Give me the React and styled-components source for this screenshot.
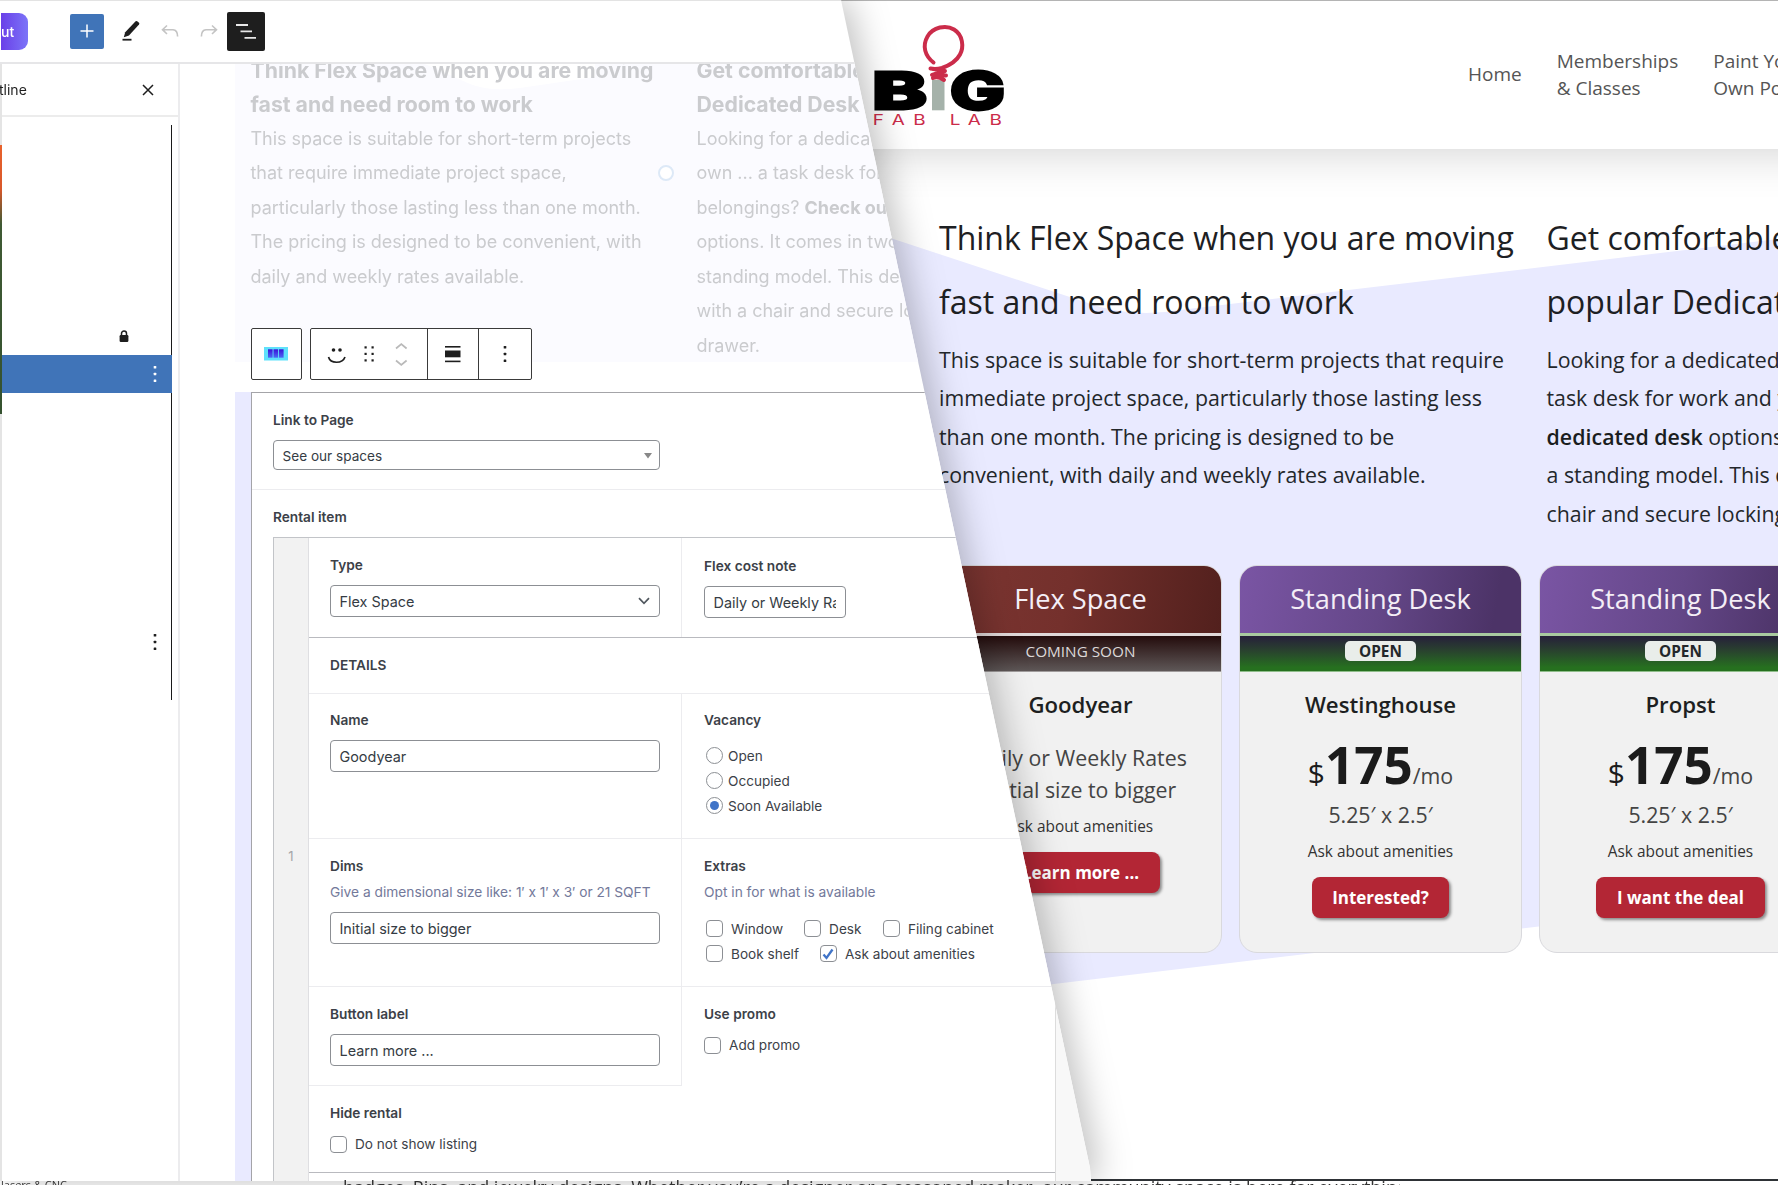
import React from 'react';
import styled, { createGlobalStyle, css } from 'styled-components';

const Global = createGlobalStyle`
  *, *::before, *::after { box-sizing: border-box; }
  html, body { margin: 0; padding: 0; }
  body { width: 1778px; height: 1185px; overflow: hidden; background: #fff; }
  h2, h3, p { margin: 0; font-weight: 400; }
`;

const ui = `Inter, "Liberation Sans", sans-serif`;
const site = `"Open Sans", "Noto Sans", sans-serif`;

const Stage = styled.main`
  display: grid;
  grid-template: 1185px / 1778px;
  width: 1778px;
  height: 1185px;
  overflow: hidden;
  background: #fff;
`;

/* ---------- public site ---------- */

const Site = styled.section`
  grid-area: 1 / 1;
  display: flex;
  flex-direction: column;
  height: 1181px;
  overflow: hidden;
  font-family: ${site};
  color: #23272b;
  border-top: 1px solid #b4b4b4;
  border-bottom: 2px solid #2e3236;
`;

const SiteHeader = styled.header`
  flex: none;
  display: flex;
  align-items: center;
  justify-content: space-between;
  height: 148px;
  margin-right: -80px;
  padding: 0 80px 0 872px;
  background: #fff;
  box-shadow: 0 0 50px rgba(0, 0, 0, 0.2);
  z-index: 1;
`;

const Nav = styled.nav`
  display: flex;
  align-items: center;
  gap: 35px;
  width: 310px;
  padding-bottom: 1px;
  overflow: hidden;
  font-size: 19px;
  line-height: 26.5px;
  color: #555;
  white-space: nowrap;
`;

const NavItem = styled.a`
  flex: none;
`;

const Hero = styled.div`
  position: relative;
  flex: 1;
  padding: 57px 0 0 939px;
`;

const HeroShape = styled.svg`
  position: absolute;
  left: 0;
  top: 0;
`;

const HeroColumns = styled.div`
  position: relative;
  display: grid;
  grid-template-columns: 607.5px 560px;
  height: 359px;
`;

const HeroTitle = styled.h2`
  font-size: 32px;
  line-height: 64px;
  white-space: nowrap;
  color: #1d2023;
`;

const HeroText = styled.p`
  margin-top: 7px;
  font-size: 21.33px;
  line-height: 38.4px;
  white-space: nowrap;
`;

const Strong = styled.strong`
  font-weight: 600;
  letter-spacing: 0.05px;
  color: #1a1d20;
`;

const Cards = styled.div`
  position: relative;
  display: grid;
  grid-template-columns: repeat(3, 283px);
  gap: 17px;
`;

const Card = styled.article`
  display: flex;
  flex-direction: column;
  align-items: center;
  height: 388px;
  border: 1px solid #d9d9dd;
  border-radius: 18px;
  background: #f1f1f1;
  overflow: hidden;
`;

const CardHead = styled.h3`
  flex: none;
  align-self: stretch;
  height: 67px;
  font-size: 27.2px;
  line-height: 65px;
  text-align: center;
  color: #f4eef6;
  background: ${(p) =>
    p.$tone === 'flex'
      ? 'linear-gradient(100deg, #7c3632 0%, #74302c 45%, #52201d 100%)'
      : 'linear-gradient(100deg, #7a55a4 0%, #644788 50%, #4c3367 90%)'};
`;

const Status = styled.div`
  flex: none;
  align-self: stretch;
  display: flex;
  align-items: center;
  justify-content: center;
  height: 39px;
  padding-bottom: 5px;
  border-top: 3px solid ${(p) => (p.$open ? '#a9c9a0' : '#e0d8d8')};
  border-bottom: 1px solid ${(p) => (p.$open ? '#8fbd8a' : '#a09c9c')};
  font-size: 15.3px;
  line-height: 20px;
  color: #dcd8d8;
  background: ${(p) =>
    p.$open
      ? 'linear-gradient(#261f3a, #29402f 40%, #26701f 90%)'
      : 'linear-gradient(#240c0c, #5e5757)'};
`;

const Badge = styled.span`
  padding: 0 14px;
  border-radius: 5px;
  background: #e9edea;
  color: #23272b;
  font-weight: 700;
`;

const CardName = styled.div`
  margin-top: 18px;
  font-size: 22.2px;
  font-weight: 600;
  line-height: 30px;
  color: #1d1f21;
`;

const CardLine = styled.div`
  font-size: 21.33px;
  line-height: 32px;
  color: #444;
  white-space: nowrap;
  margin-top: ${(p) => p.$top || 0}px;
`;

const Amenity = styled.div`
  margin-top: 11px;
  font-size: 15.4px;
  line-height: 20px;
  color: #333;
`;

const Price = styled.div`
  display: flex;
  align-items: baseline;
  margin-top: 10px;
  height: 69px;
  line-height: 69px;
  color: #1b1b1b;
`;

const Currency = styled.span`
  font-size: 30px;
`;

const Amount = styled.span`
  font-size: 51.2px;
  font-weight: 700;
`;

const Per = styled.span`
  font-size: 21.4px;
  color: #444;
`;

const Action = styled.button`
  margin-top: 15px;
  height: 41px;
  padding: 0 20.5px 1px;
  border: 0;
  border-radius: 8px;
  background: #b32635;
  box-shadow: 2px 2px 3px rgba(0, 0, 0, 0.42);
  color: #fff;
  font: 700 17px ${site};
  white-space: nowrap;
`;

/* ---------- editor ---------- */

const EditorShadow = styled.section`
  grid-area: 1 / 1;
  z-index: 2;
  filter: drop-shadow(7px 0 17px rgba(0, 0, 0, 0.25));
`;

const Editor = styled.div`
  display: flex;
  flex-direction: column;
  width: 1110px;
  height: 1181px;
  overflow: hidden;
  background: #fff;
  border-top: 1px solid #e3e3e3;
  font-family: ${ui};
  color: #3c4148;
  clip-path: polygon(0 0, 841px 0, 1090px 1168px, 1091px 1181px, 0 1181px);
`;

const TopBar = styled.header`
  flex: none;
  display: flex;
  align-items: center;
  height: 63px;
  padding: 0 0 1px 1px;
  border-bottom: 2px solid #e6e6e8;
`;

const LayoutButton = styled.span`
  width: 27px;
  height: 37px;
  border-radius: 0 9px 9px 0;
  background: linear-gradient(90deg, #6a3fe8, #7c74f8);
  color: #fff;
  font-size: 14px;
  font-weight: 500;
  line-height: 38px;
`;

const ToolButton = styled.span`
  display: grid;
  place-items: center;
  width: ${(p) => p.$w}px;
  height: ${(p) => p.$h}px;
  margin-left: ${(p) => p.$ml}px;
  border-radius: 2px;
  background: ${(p) => p.$bg || 'transparent'};
`;

const Body = styled.div`
  flex: 1;
  display: flex;
  min-height: 0;
`;

const PhotoEdge = styled.div`
  flex: none;
  width: 2px;
  background: linear-gradient(
    #e4e4e4 0 81px, #e8622c 81px, #d9582a 125px, #3f5a34 160px, #35522f 350px, #e4e4e4 350px
  );
`;

const Outline = styled.aside`
  flex: none;
  display: flex;
  flex-direction: column;
  width: 178px;
  border-right: 2px solid #ececee;
`;

const OutlineHead = styled.div`
  display: flex;
  align-items: center;
  justify-content: space-between;
  height: 53px;
  padding-right: 24px;
  border-bottom: 2px solid #ececec;
  font-size: 14px;
  color: #1e1e1e;
`;

const OutlineTitle = styled.span`
  margin-left: -3px;
`;

const OutlineList = styled.div`
  display: flex;
  flex-direction: column;
  width: 170px;
  height: 575px;
  margin-top: 8px;
  border-right: 1px solid #1a1a1a;
`;

const OutlineRow = styled.div`
  display: flex;
  align-items: center;
  justify-content: flex-end;
  height: 38px;
  margin-top: ${(p) => p.$mt}px;
  padding-right: ${(p) => p.$pr}px;
  margin-right: ${(p) => (p.$active ? -1 : 0)}px;
  background: ${(p) => (p.$active ? '#4074b8' : 'transparent')};
`;

const Canvas = styled.div`
  flex: 1;
  min-width: 0;
  display: flex;
  flex-direction: column;
  padding-left: 55px;
`;

const Faded = styled.div`
  flex: none;
  position: relative;
  height: 298px;
  background: #fbfbff;
`;

const FadedShape = styled.svg`
  position: absolute;
  left: 190px;
  top: 0;
`;

const FadedColumns = styled.div`
  position: relative;
  display: grid;
  grid-template-columns: 446px 400px;
  padding-left: 15.5px;
  height: 298px;
  overflow: hidden;
  color: #cacbce;
`;

const FadedTitle = styled.h2`
  margin-top: -10px;
  font-size: 21.25px;
  font-weight: 700;
  line-height: 33.8px;
  white-space: nowrap;
`;

const FadedText = styled.p`
  font-size: 18px;
  line-height: 34.5px;
  letter-spacing: -0.02px;
  white-space: nowrap;
`;

const Handle = styled.span`
  position: absolute;
  left: 423px;
  top: 101px;
  width: 16px;
  height: 16px;
  border: 2px solid #dde9f7;
  border-radius: 50%;
  background: #fff;
`;

const BlockToolbar = styled.div`
  position: absolute;
  left: 15.5px;
  top: 264px;
  display: flex;
  gap: 8px;
  height: 52px;
`;

const ToolGroup = styled.div`
  display: flex;
  border: 1px solid #3a3a3a;
  border-radius: 2px;
  background: #fff;
`;

const ToolCell = styled.div`
  display: flex;
  align-items: center;
  justify-content: center;
  width: ${(p) => p.$w}px;
  & + & { border-left: 1px solid #3a3a3a; }
`;

const FormBand = styled.div`
  flex: 1;
  margin-top: 30px;
  padding-left: 16px;
  background: #e9eaff;
`;

const Form = styled.div`
  height: 100%;
  border-left: 1px solid #a4a4a8;
  border-top: 1px solid #a4a4a8;
  background: #fff;
`;

const LinkField = styled.div`
  height: 97px;
  padding: 17px 0 0 21px;
  border-bottom: 1px solid #ececef;
`;

const Label = styled.div`
  height: 20px;
  font-size: 13.7px;
  line-height: 20px;
  font-weight: 600;
  white-space: nowrap;
`;

const Help = styled.div`
  margin: 6px 0 2px;
  height: 20px;
  font-size: 13.75px;
  line-height: 20px;
  color: #73799a;
  white-space: nowrap;
`;

const Input = styled.div`
  display: flex;
  align-items: center;
  justify-content: space-between;
  width: ${(p) => p.$w || 330}px;
  height: ${(p) => p.$h || 32}px;
  margin-top: 10px;
  padding: ${(p) => p.$pt || 0}px ${(p) => p.$pr || 9}px 0 8.5px;
  border: 1px solid #8c8f94;
  border-radius: 4px;
  background: #fff;
  font-size: ${(p) => p.$fs || 14.4}px;
  color: #353c44;
  white-space: nowrap;
`;

const Clip = styled.span`
  overflow: hidden;
`;

const Repeater = styled.div`
  display: grid;
  grid-template-columns: 35px 746px 60px;
  height: 645px;
  margin: 10px 0 0 21px;
  border: 1px solid #c2c4c8;
  border-width: 1px 0 0 1px;
`;

const RentalTitle = styled(Label)`
  margin: 17px 0 0 21px;
`;

const Gutter = styled.div`
  display: grid;
  place-items: center;
  padding-bottom: 9px;
  border-right: 1px solid #dfdfe2;
  background: #f2f2f2;
  color: #a5a5a8;
  font-size: 13px;
`;

const EndGutter = styled.div`
  border-left: 1px solid #dcdcdc;
  background: #f8f8f8;
`;

const Rows = styled.div`
  display: flex;
  flex-direction: column;
`;

const Row = styled.div`
  flex: none;
  display: grid;
  grid-template-columns: 373px 1fr;
  height: ${(p) => p.$h}px;
  border-bottom: ${(p) => (p.$half ? 0 : 1)}px solid ${(p) => (p.$strong ? '#b9babf' : '#ececef')};
`;

const Cell = styled.div`
  padding: ${(p) => p.$pt || 17}px 0 0 21px;
  & + & { padding-left: 22px; }
  ${(p) =>
    p.$divide &&
    css`
      border-right: 1px solid #ececef;
    `}
  ${(p) =>
    p.$under &&
    css`
      border-bottom: 1px solid #ececef;
    `}
`;

const Choices = styled.div`
  display: flex;
  flex-direction: column;
  margin: ${(p) => p.$mt}px 0 0 ${(p) => p.$ml || 0}px;
`;

const ChoiceRow = styled.div`
  display: flex;
  height: 25px;
`;

const Choice = styled.div`
  display: flex;
  align-items: center;
  gap: ${(p) => p.$gap || 8}px;
  margin-right: ${(p) => p.$mr || 0}px;
  font-size: 13.6px;
  line-height: 20px;
  white-space: nowrap;
`;

const Box = styled.span`
  display: grid;
  place-items: center;
  flex: none;
  width: 17px;
  height: 17px;
  border: 1px solid #8c8f94;
  border-radius: ${(p) => (p.$round ? '50%' : '4px')};
  background: #fff;
`;

const Dot = styled.span`
  width: 9px;
  height: 9px;
  border-radius: 50%;
  background: #4074c8;
`;

/* ---------- page behind the composite ---------- */

const Backdrop = styled.footer`
  grid-area: 1 / 1;
  align-self: end;
  z-index: 3;
  display: flex;
  height: 5px;
  overflow: hidden;
  font-family: ${site};
  color: #333;
  white-space: nowrap;
`;

const BackdropSmall = styled.div`
  width: 343px;
  padding-left: 1px;
  font-size: 11px;
  line-height: 10px;
  height: 5px;
  overflow: hidden;
`;

const BackdropText = styled.div`
  height: 5px;
  width: 1057px;
  overflow: hidden;
  font-size: 18px;
  line-height: 15px;
`;

const Kebab = ({ color = '#1e1e1e' }) => (
  <svg width="4" height="18" viewBox="0 0 4 18" fill={color}>
    <rect x="0.7" y="1" width="2.6" height="2.6" rx=".6" />
    <rect x="0.7" y="7.7" width="2.6" height="2.6" rx=".6" />
    <rect x="0.7" y="14.4" width="2.6" height="2.6" rx=".6" />
  </svg>
);

const Logo = () => (
  <svg width="134" height="110" viewBox="0 0 134 110" fontFamily={ui}>
    <g fontSize="51.5" fontWeight="800" stroke="#000" strokeWidth="2.8">
      <text x="0" y="88.8" textLength="55" lengthAdjust="spacingAndGlyphs">B</text>
      <text x="78" y="88.8" textLength="55" lengthAdjust="spacingAndGlyphs">G</text>
    </g>
    <rect x="60" y="60" width="12.5" height="30.3" fill="#a5b2aa" />
    <path
      d="M61.5 42.5 C53 36 50 26 55.5 16.5 C61 7 74 4.5 82 9.5 C91 15 92 27 88 34.5 C84 42 77 45.5 70 48 C66 49 61 49 58.5 48.5 M58.5 48.5 L73 51 L60 55 L74 55.5 M61 58 C65 56 69 58 72 60"
      fill="none" stroke="#cb2c4a" strokeWidth="4" strokeLinecap="round" strokeLinejoin="round"
    />
    <g fill="#cb2c4a" fontSize="14" transform="scale(1.35 1)">
      <text x="0.6 14.6 30.6" y="104.8">FAB</text>
      <text x="57.6 71 87" y="104.8">LAB</text>
    </g>
  </svg>
);

const Field = ({ label, value, help }) => (
  <>
    <Label>{label}</Label>
    {help && <Help>{help}</Help>}
    <Input>{value}</Input>
  </>
);

const Check = ({ children, on, ...rest }) => (
  <Choice {...rest}>
    <Box>
      {on && (
        <svg width="14" height="14" viewBox="0 0 14 14">
          <path d="M2.5 7.5 L5.5 11 L11.5 2.5" fill="none" stroke="#4074c8" strokeWidth="2.3" />
        </svg>
      )}
    </Box>
    {children}
  </Choice>
);

const Radio = ({ children, on }) => (
  <Choice $gap={5}>
    <Box $round>{on && <Dot />}</Box>
    {children}
  </Choice>
);

const DeskCard = ({ name, action }) => (
  <Card>
    <CardHead>Standing Desk</CardHead>
    <Status $open><Badge>OPEN</Badge></Status>
    <CardName>{name}</CardName>
    <Price>
      <Currency>$</Currency>
      <Amount>175</Amount>
      <Per>/mo</Per>
    </Price>
    <CardLine>5.25′ x 2.5′</CardLine>
    <Amenity>Ask about amenities</Amenity>
    <Action>{action}</Action>
  </Card>
);

const SitePreview = () => (
  <Site>
    <SiteHeader>
      <Logo />
      <Nav>
        <NavItem>Home</NavItem>
        <NavItem>Memberships<br />&amp; Classes</NavItem>
        <NavItem>Paint Your<br />Own Pottery</NavItem>
      </Nav>
    </SiteHeader>
    <Hero>
      <HeroShape width="1778" height="1031" viewBox="0 150 1778 1031">
        <path d="M860 229 L1085 303 Q1130 320 1180 311 L1778 240 V899 L860 1008 Z" fill="#e9eaff" />
      </HeroShape>
      <HeroColumns>
        <div>
          <HeroTitle>Think Flex Space when you are moving<br />fast and need room to work</HeroTitle>
          <HeroText>
            This space is suitable for short-term projects that require<br />
            immediate project space, particularly those lasting less<br />
            than one month. The pricing is designed to be<br />
            convenient, with daily and weekly rates available.
          </HeroText>
        </div>
        <div>
          <HeroTitle>Get comfortable<br />popular Dedicated</HeroTitle>
          <HeroText>
            Looking for a dedicated<br />
            task desk for work and your<br />
            <Strong>dedicated desk</Strong> options.<br />
            a standing model. This desk<br />
            chair and secure locking
          </HeroText>
        </div>
      </HeroColumns>
      <Cards>
        <Card>
          <CardHead $tone="flex">Flex Space</CardHead>
          <Status>COMING SOON</Status>
          <CardName>Goodyear</CardName>
          <CardLine $top={22}>Daily or Weekly Rates</CardLine>
          <CardLine>Initial size to bigger</CardLine>
          <Amenity>Ask about amenities</Amenity>
          <Action>Learn more ...</Action>
        </Card>
        <DeskCard name="Westinghouse" action="Interested?" />
        <DeskCard name="Propst" action="I want the deal" />
      </Cards>
    </Hero>
  </Site>
);

const EditorTop = () => (
  <TopBar>
    <LayoutButton>ut</LayoutButton>
    <ToolButton $w={34} $h={35} $ml={42} $bg="#4074b8">
      <svg width="14" height="14" viewBox="0 0 14 14"><path d="M7 .5V13.5M.5 7H13.5" stroke="#fff" strokeWidth="1.5" /></svg>
    </ToolButton>
    <ToolButton $w={20} $h={22} $ml={17}>
      <svg width="20" height="22" viewBox="0 0 20 22" fill="#1e1e1e">
        <path d="M14.6 1.3 Q15.3 .6 16.2 1.3 L18 2.8 Q18.7 3.6 18 4.5 L8 15.6 L2.8 17.2 L4.2 12.2 Z" />
        <rect x="1.5" y="18.8" width="9" height="1.8" />
      </svg>
    </ToolButton>
    <ToolButton $w={18} $h={14} $ml={20}>
      <svg width="18" height="14" viewBox="0 0 18 14" fill="none" stroke="#c4c4c4" strokeWidth="1.6"><path d="M6 1.5 L1.5 5.7 L6 10 M1.5 5.7 H12 Q16.6 6 16.6 12.5" /></svg>
    </ToolButton>
    <ToolButton $w={18} $h={14} $ml={21}>
      <svg width="18" height="14" viewBox="0 0 18 14" fill="none" stroke="#c4c4c4" strokeWidth="1.6"><path d="M12 1.5 L16.5 5.7 L12 10 M16.5 5.7 H6 Q1.4 6 1.4 12.5" /></svg>
    </ToolButton>
    <ToolButton $w={38} $h={39} $ml={9} $bg="#1e1e1e">
      <svg width="20" height="17" viewBox="0 0 20 17" stroke="#e8e8e8" strokeWidth="1.8"><path d="M0 2H12M4.5 8.4H16M8.5 14.8H20" /></svg>
    </ToolButton>
  </TopBar>
);

const OutlinePanel = () => (
  <Outline>
    <OutlineHead>
      <OutlineTitle>tline</OutlineTitle>
      <svg width="12" height="12" viewBox="0 0 12 12"><path d="M1 1L11 11M11 1L1 11" stroke="#1e1e1e" strokeWidth="1.5" /></svg>
    </OutlineHead>
    <OutlineList>
      <OutlineRow $mt={192} $pr={42}>
        <svg width="10" height="13" viewBox="0 0 10 13"><path d="M2.5 6V3.6a2.5 2.5 0 0 1 5 0V6" fill="none" stroke="#1e1e1e" strokeWidth="1.5" /><rect x=".6" y="5" width="8.8" height="7" rx="1.2" fill="#1e1e1e" /></svg>
      </OutlineRow>
      <OutlineRow $mt={0} $pr={15} $active><Kebab color="#fff" /></OutlineRow>
      <OutlineRow $mt={230} $pr={14}><Kebab /></OutlineRow>
    </OutlineList>
  </Outline>
);

const BlockTools = () => (
  <BlockToolbar>
    <ToolGroup>
      <ToolCell $w={49}>
        <svg width="24" height="14" viewBox="0 0 24 14">
          <defs>
            <linearGradient id="bar" x1="0" y1="0" x2="0" y2="1"><stop offset="0" stopColor="#3a10d8" /><stop offset="1" stopColor="#4a6cf4" /></linearGradient>
          </defs>
          <rect width="24" height="13.5" fill="#5fe1fb" />
          {[4, 9.5, 15].map((x) => <rect key={x} x={x} y="2.3" width="4.6" height="8.4" fill="url(#bar)" />)}
        </svg>
      </ToolCell>
    </ToolGroup>
    <ToolGroup>
      <ToolCell $w={116}>
        <svg width="90" height="30" viewBox="0 0 90 30" fill="#1e1e1e">
          <circle cx="9.5" cy="11" r="1.8" /><circle cx="16" cy="11" r="1.8" />
          <path d="M4.5 18 C6.5 25 18.5 25 21 18" fill="none" stroke="#1e1e1e" strokeWidth="1.7" />
          {[41.5, 48.5].map((x) => [8, 14.5, 21].map((y) => <rect key={`${x}-${y}`} x={x - 1} y={y - 0.7} width="2.2" height="2.2" />))}
          <path d="M72 9.5L77.3 5L82.6 9.5M72 21.5L77.3 26L82.6 21.5" fill="none" stroke="#b9b9b9" strokeWidth="1.7" />
        </svg>
      </ToolCell>
      <ToolCell $w={51.5}>
        <svg width="16" height="18" viewBox="0 0 16 18" fill="#1e1e1e"><rect y="1" width="15.5" height="1.6" /><rect y="5.5" width="15.5" height="6.8" /><rect y="15.6" width="15.5" height="1.6" /></svg>
      </ToolCell>
      <ToolCell $w={52.5}><Kebab /></ToolCell>
    </ToolGroup>
  </BlockToolbar>
);

const RentalRows = () => (
  <Rows>
    <Row $h={100} $strong>
      <Cell $divide>
        <Label>Type</Label>
        <Input>
          Flex Space
          <svg width="12" height="8" viewBox="0 0 12 8"><path d="M1 1.2L6 6.3L11 1.2" fill="none" stroke="#50575e" strokeWidth="1.7" /></svg>
        </Input>
      </Cell>
      <Cell $pt={18}>
        <Label>Flex cost note</Label>
        <Input $w={142}><Clip>Daily or Weekly Rates</Clip></Input>
      </Cell>
    </Row>
    <Row $h={56}><Cell><Label>DETAILS</Label></Cell></Row>
    <Row $h={145}>
      <Cell $divide $pt={16}><Field label="Name" value="Goodyear" /></Cell>
      <Cell $pt={16}>
        <Label>Vacancy</Label>
        <Choices $mt={13} $ml={2}>
          <ChoiceRow><Radio>Open</Radio></ChoiceRow>
          <ChoiceRow><Radio>Occupied</Radio></ChoiceRow>
          <ChoiceRow><Radio on>Soon Available</Radio></ChoiceRow>
        </Choices>
      </Cell>
    </Row>
    <Row $h={148}>
      <Cell $divide><Field label="Dims" help="Give a dimensional size like: 1′ x 1′ x 3′ or 21 SQFT" value="Initial size to bigger" /></Cell>
      <Cell>
        <Label>Extras</Label>
        <Help>Opt in for what is available</Help>
        <Choices $mt={14} $ml={2}>
          <ChoiceRow><Check $mr={21}>Window</Check><Check $mr={21.5}>Desk</Check><Check>Filing cabinet</Check></ChoiceRow>
          <ChoiceRow><Check $mr={21}>Book shelf</Check><Check on>Ask about amenities</Check></ChoiceRow>
        </Choices>
      </Cell>
    </Row>
    <Row $h={99} $half>
      <Cell $divide $under><Field label="Button label" value="Learn more ..." /></Cell>
      <Cell>
        <Label>Use promo</Label>
        <Choices $mt={11}><Check>Add promo</Check></Choices>
      </Cell>
    </Row>
    <Row $h={87} $strong>
      <Cell>
        <Label>Hide rental</Label>
        <Choices $mt={11}><Check>Do not show listing</Check></Choices>
      </Cell>
    </Row>
  </Rows>
);

const BlockEditor = () => (
  <EditorShadow>
    <Editor>
      <EditorTop />
      <Body>
        <PhotoEdge />
        <OutlinePanel />
        <Canvas>
          <Faded>
            <FadedShape width="170" height="28" viewBox="0 0 170 28"><path d="M0 0 L45 20 Q65 28 95 24 L170 13 V0 Z" fill="#fff" /></FadedShape>
            <FadedColumns>
              <div>
                <FadedTitle>Think Flex Space when you are moving<br />fast and need room to work</FadedTitle>
                <FadedText>
                  This space is suitable for short-term projects<br />
                  that require immediate project space,<br />
                  particularly those lasting less than one month.<br />
                  The pricing is designed to be convenient, with<br />
                  daily and weekly rates available.
                </FadedText>
              </div>
              <div>
                <FadedTitle>Get comfortable<br />Dedicated Desk</FadedTitle>
                <FadedText>
                  Looking for a dedicated<br />
                  own ... a task desk for<br />
                  belongings? <b>Check out</b><br />
                  options. It comes in two<br />
                  standing model. This desk<br />
                  with a chair and secure locking<br />
                  drawer.
                </FadedText>
              </div>
            </FadedColumns>
            <Handle />
            <BlockTools />
          </Faded>
          <FormBand>
            <Form>
              <LinkField>
                <Label>Link to Page</Label>
                <Input $w={387} $h={30} $fs={13.6} $pr={7} $pt={1}>
                  See our spaces
                  <svg width="8" height="6" viewBox="0 0 8 6"><path d="M0 0H8L4 5.5Z" fill="#888" /></svg>
                </Input>
              </LinkField>
              <RentalTitle>Rental item</RentalTitle>
              <Repeater>
                <Gutter>1</Gutter>
                <RentalRows />
                <EndGutter />
              </Repeater>
            </Form>
          </FormBand>
        </Canvas>
      </Body>
    </Editor>
  </EditorShadow>
);

export default function App() {
  return (
    <>
      <Global />
      <Stage>
        <SitePreview />
        <BlockEditor />
        <Backdrop>
          <BackdropSmall>lasers &amp; CNC</BackdropSmall>
          <BackdropText>
            badges, Pins, and jewelry designs. Whether you’re a designer or a seasoned maker, our community space is here for everything you
          </BackdropText>
        </Backdrop>
      </Stage>
    </>
  );
}
